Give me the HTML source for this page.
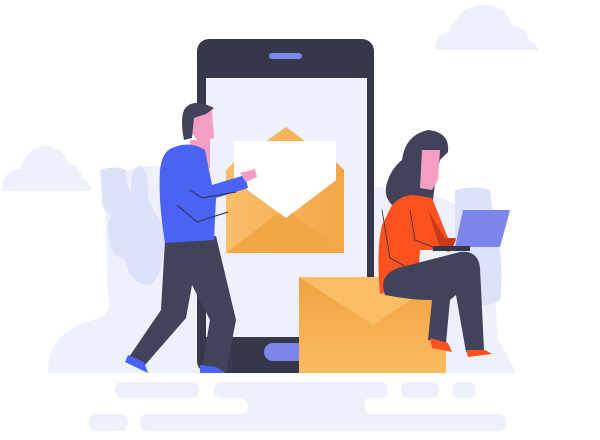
<!DOCTYPE html>
<html><head><meta charset="utf-8"><style>html,body{margin:0;padding:0;background:#fff;width:600px;height:440px;overflow:hidden}</style></head>
<body>
<svg width="600" height="440" viewBox="0 0 600 440" xmlns="http://www.w3.org/2000/svg">
<defs>
<linearGradient id="eg" x1="0" y1="0" x2="0" y2="1"><stop offset="0" stop-color="#f0a240"/><stop offset="1" stop-color="#fbbb62"/></linearGradient>
<linearGradient id="el" x1="0" y1="0" x2="1" y2="0"><stop offset="0" stop-color="#fbbd6a"/><stop offset="1" stop-color="#f2a746"/></linearGradient>
</defs>
<path d="M435 50 Q435 35 448 32 Q460 5 485 5 Q505 5 512 25 Q528 28 528 40 Q538 45 538 50 Z" fill="#eef0fc"/>
<path d="M2 191 Q2 170 20 169 Q28 146 45 146 Q62 146 68 163 Q80 165 82 178 Q91 182 91 191 Z" fill="#eef0fc"/>
<path d="M60 430 Q48 400 48 370 Q48 330 100 318 Q112 314 108 295 L105 210 Q105 168 150 166 L410 190 Q470 200 492 240 Q495 300 498 340 Q525 380 522 410 Q520 430 515 430 Z" fill="#eef0fc"/>
<path d="M100 170 Q115 165 126 170 Q125 185 132 195 Q128 170 140 165 Q150 172 148 200 L165 230 Q165 275 150 285 Q130 285 125 260 Q110 255 110 240 Q105 225 112 215 Q100 210 102 195 Z" fill="#dde1fa"/>
<path d="M455 190 Q475 185 490 190 L495 230 Q505 260 500 300 Q485 310 470 300 Q460 270 455 240 Z" fill="#dde1fa"/>
<rect x="0" y="373" width="600" height="67" fill="#fff"/>
<rect x="115" y="382" width="84" height="16" rx="7" fill="#eef0fc"/>
<rect x="214" y="382" width="174" height="16" rx="7" fill="#eef0fc"/>
<rect x="401" y="382" width="38" height="16" rx="7" fill="#eef0fc"/>
<rect x="452" y="382" width="24" height="16" rx="7" fill="#eef0fc"/>
<path d="M230 395 L375 395 Q364 398 364 405 Q364 412 372 415 L240 415 Q248 412 248 405 Q248 398 230 395 Z" fill="#eef0fc"/>
<rect x="89" y="414" width="39" height="17" rx="7" fill="#eef0fc"/>
<rect x="140" y="414" width="366" height="17" rx="7" fill="#eef0fc"/>
<rect x="197" y="39" width="177" height="334" rx="12" fill="#36374a"/>
<rect x="206" y="78" width="161" height="259" fill="#eef0fc"/>
<rect x="269" y="53" width="33" height="6" rx="3" fill="#7b86e8"/>
<rect x="264" y="343" width="50" height="18" rx="9" fill="#7b86e8"/>
<path d="M226 170 L286 127 L344 170 Z" fill="#f5b55a"/>
<rect x="234" y="141" width="102" height="80" fill="#fff"/>
<path d="M226 170 L226 253 L344 253 L344 170 L336 162 L336 180 L286 218 L234 180 L234 162 Z" fill="url(#el)"/>
<path d="M226 253 L285 208 L344 253 Z" fill="#f2a646"/>
<path d="M234 141 L336 141 L336 180 L286 218 L234 180 Z" fill="#fff"/>
<rect x="299" y="277" width="147" height="96" fill="url(#eg)"/>
<path d="M299 277 L373 325 L446 277 Z" fill="#fbbc63"/>
<!-- man -->
<path d="M165 240 L216 236 L236 320 L226 372 L201 372 L210 320 L192 285 L186 318 L145 365 L129 357 L161 310 Z" fill="#43425b"/>
<path d="M128 355 L144 362 L148 373 L125 362 Z" fill="#4a63f5"/>
<path d="M200 365 L216 367 L226 373 L200 373 Z" fill="#4a63f5"/>
<path d="M190 140 L210 140 L210 168 L190 168 Z" fill="#f59ec3"/>
<path d="M172 148 Q190 140 205 150 L212 185 L245 175 L248 188 L216 198 L214 240 L165 243 Q158 200 160 170 Q162 152 172 148 Z" fill="#4a63f5"/>
<path d="M240 173 L255 169 L257 177 L246 182 Z" fill="#f59ec3"/>
<path d="M190 113 L212 110 L214 138 L200 143 L193 135 Z" fill="#f59ec3"/>
<path d="M184 110 Q190 100 205 104 L214 108 L206 114 L194 118 L192 138 L184 140 Q180 120 184 110 Z" fill="#43425b"/>
<path d="M177 205 L197 222 L228 212 M190 190 L202 198 L236 192" stroke="#2e2d40" stroke-width="1" fill="none"/>
<!-- woman -->
<path d="M428 130 Q450 132 448 152 L440 160 Q435 180 433 200 Q425 212 415 205 Q402 212 392 205 Q382 195 388 180 Q392 168 402 160 Q405 135 428 130 Z" fill="#43425b"/>
<path d="M422 150 L440 150 L438 180 L432 190 L420 188 Z" fill="#f59ec3"/>
<path d="M392 205 Q405 192 420 196 L432 198 L448 238 L456 240 L450 252 L440 250 L420 250 L418 282 Q400 290 380 294 Q376 250 382 225 Z" fill="#fc5220"/>
<path d="M428 210 L445 238 L456 238 L452 250 L440 248 Z" fill="#c93a18"/>
<path d="M382 210 L390 258 L412 270 M410 210 L415 240 L440 250" stroke="#2e2d40" stroke-width="0.8" fill="none"/>
<path d="M385 295 Q378 275 398 268 L460 252 Q478 250 480 268 L484 350 L466 352 L456 295 L450 300 L446 343 L428 340 L432 300 Q410 300 385 295 Z" fill="#43425b"/>
<path d="M430 338 L448 343 L452 352 L432 348 Z" fill="#fc5220"/>
<path d="M466 350 L485 350 L492 354 L468 357 Z" fill="#fc5220"/>
<path d="M463 210 L510 210 L500 247 L455 247 Z" fill="#7b86e8"/>
<path d="M433 246 L470 246 L470 251 L433 251 Z" fill="#36374a"/>
</svg>
</body></html>
